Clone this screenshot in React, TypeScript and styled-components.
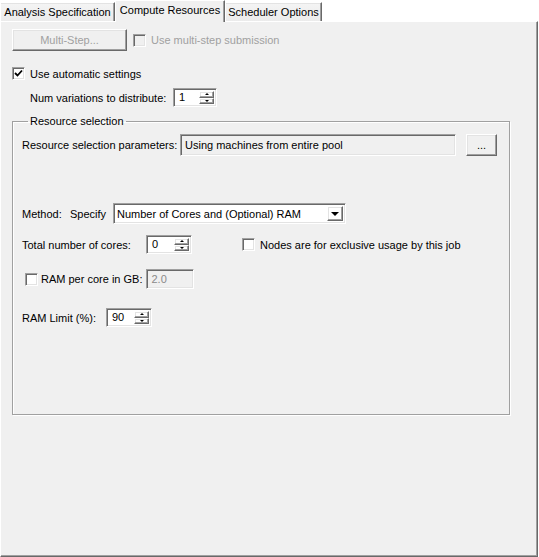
import * as React from 'react';
import styled, { createGlobalStyle, css } from 'styled-components';

/*!
 * Base
 */

const GlobalStyle = createGlobalStyle`
  html, body {
    margin: 0;
    padding: 0;
    background: #ffffff;
  }

  body {
    font: 11px "Liberation Sans", Arial, sans-serif;
    color: #000000;
  }
`;

// classic 3D edges
const sunken = css`
  border-style: solid;
  border-width: 1px;
  border-color: #a0a0a0 #ffffff #ffffff #a0a0a0;
  box-shadow: inset 1px 1px 0 #696969, inset -1px -1px 0 #e3e3e3;
`;

const raised = css`
  border-style: solid;
  border-width: 1px;
  border-color: #ffffff #696969 #696969 #ffffff;
  box-shadow: inset -1px -1px 0 #a0a0a0, inset 1px 1px 0 #e3e3e3;
`;

/*!
 * Components
 */

const Window = styled.div`
  width: 539px;
  height: 557px;
  display: flex;
  flex-direction: column;
  background: #ffffff;
  box-sizing: border-box;
`;

const TabStrip = styled.div`
  display: flex;
  align-items: flex-end;
  height: 21px;
  flex-shrink: 0;
`;

const Tab = styled.div<{ $active?: boolean; $width: number }>`
  box-sizing: border-box;
  width: ${(p) => p.$width}px;
  height: ${(p) => (p.$active ? 22 : 19)}px;
  margin-bottom: ${(p) => (p.$active ? -1 : 0)}px;
  padding-top: 3px;
  text-align: center;
  background: ${(p) => (p.$active ? '#f0f0f0' : 'linear-gradient(#f4f4f4, #ebebeb)')};
  border-style: solid;
  border-width: 1px 1px 0 1px;
  border-color: #ffffff #696969 transparent #ffffff;
  box-shadow: ${(p) => (p.$active ? 'inset -1px 0 0 #a0a0a0' : 'inset -1px 0 0 #a0a0a0, inset 0 1px 0 #e3e3e3')};
  position: relative;
  z-index: ${(p) => (p.$active ? 2 : 1)};
  white-space: nowrap;
`;

const Panel = styled.div`
  flex: 1;
  width: 538px;
  box-sizing: border-box;
  background: #f0f0f0;
  border-style: solid;
  border-width: 1px;
  border-color: #ffffff #696969 #696969 #ffffff;
  box-shadow: inset -1px -1px 0 #a0a0a0;
  padding: 7px 0 0 11px;
  display: flex;
  flex-direction: column;
`;

const Row = styled.div<{ $top?: number; $indent?: number; $height?: number }>`
  display: flex;
  align-items: center;
  margin-top: ${(p) => p.$top ?? 0}px;
  padding-left: ${(p) => p.$indent ?? 0}px;
  height: ${(p) => p.$height ?? 19}px;
`;

const Label = styled.span<{ $width?: number; $disabled?: boolean }>`
  display: inline-block;
  width: ${(p) => (p.$width ? `${p.$width}px` : 'auto')};
  flex-shrink: 0;
  white-space: nowrap;
  color: ${(p) => (p.$disabled ? '#a0a0a0' : '#000000')};
`;

const PushButton = styled.div<{ $width: number; $disabled?: boolean; $gap?: number }>`
  box-sizing: border-box;
  width: ${(p) => p.$width}px;
  height: 22px;
  margin-left: ${(p) => p.$gap ?? 0}px;
  ${raised};
  display: flex;
  align-items: center;
  justify-content: center;
  color: ${(p) => (p.$disabled ? '#a0a0a0' : '#000000')};
  flex-shrink: 0;
`;

const CheckRow = styled.label<{ $gap?: number; $space?: number }>`
  display: flex;
  align-items: center;
  gap: ${(p) => p.$space ?? 5}px;
  margin-left: ${(p) => p.$gap ?? 0}px;
`;

const Box = styled.span<{ $disabled?: boolean }>`
  box-sizing: border-box;
  width: 13px;
  height: 13px;
  ${sunken};
  background: ${(p) => (p.$disabled ? '#f0f0f0' : '#ffffff')};
  display: flex;
  align-items: center;
  justify-content: center;
  flex-shrink: 0;
`;

// read-only text field: grey face, text stays black unless disabled
const Field = styled.div<{ $width: number; $height?: number; $disabled?: boolean; $gap?: number }>`
  box-sizing: border-box;
  width: ${(p) => p.$width}px;
  height: ${(p) => p.$height ?? 20}px;
  margin-left: ${(p) => p.$gap ?? 0}px;
  ${sunken};
  background: #f0f0f0;
  color: ${(p) => (p.$disabled ? '#8a8a8a' : '#000000')};
  display: flex;
  align-items: center;
  padding-left: 4px;
  flex-shrink: 0;
  white-space: nowrap;
  overflow: hidden;
`;

const SpinBox = styled.div<{ $width: number }>`
  box-sizing: border-box;
  width: ${(p) => p.$width}px;
  height: 19px;
  ${sunken};
  background: #ffffff;
  display: flex;
  flex-shrink: 0;
`;

const SpinValue = styled.span`
  flex: 1;
  padding: 2px 0 0 5px;
`;

const SpinButtons = styled.div`
  width: 15px;
  display: flex;
  flex-direction: column;
  padding: 2px 2px 2px 0;
`;

const SpinButton = styled.div`
  flex: 1;
  box-sizing: border-box;
  ${raised};
  display: flex;
  align-items: center;
  justify-content: center;
`;

const Arrow = styled.span<{ $down?: boolean; $size?: number }>`
  width: 0;
  height: 0;
  border-left: ${(p) => p.$size ?? 2}px solid transparent;
  border-right: ${(p) => p.$size ?? 2}px solid transparent;
  ${(p) =>
    p.$down
      ? `border-top: ${p.$size ?? 2}px solid #000;`
      : `border-bottom: ${p.$size ?? 2}px solid #000;`}
`;

const Combo = styled.div<{ $width: number }>`
  box-sizing: border-box;
  width: ${(p) => p.$width}px;
  height: 21px;
  ${sunken};
  background: #ffffff;
  display: flex;
  flex-shrink: 0;
`;

const ComboText = styled.span`
  flex: 1;
  display: flex;
  align-items: center;
  padding-left: 3px;
  white-space: nowrap;
`;

const ComboButton = styled.div`
  width: 16px;
  margin: 2px 2px 2px 0;
  box-sizing: border-box;
  ${raised};
  display: flex;
  align-items: center;
  justify-content: center;
`;

const GroupBox = styled.fieldset`
  box-sizing: border-box;
  width: 498px;
  height: 300px;
  margin: 8px 0 0 0;
  padding: 0 0 0 9px;
  border: 1px solid #a0a0a0;
  box-shadow: 1px 1px 0 #ffffff, inset 1px 1px 0 #ffffff;
  min-width: 0;
`;

const Legend = styled.legend`
  margin-left: 6px;
  padding: 0 2px;
  line-height: 13px;
`;

/*!
 * Parts
 */

const Tick = () => (
  <svg width="9" height="9" viewBox="0 0 9 9">
    <path d="M1 4 L3.5 6.5 L8 1.5" fill="none" stroke="#000" strokeWidth="1.8" />
  </svg>
);

type CheckProps = { checked?: boolean; disabled?: boolean; text: string; gap?: number; space?: number };

const Check = ({ checked, disabled, text, gap, space }: CheckProps) => (
  <CheckRow $gap={gap} $space={space}>
    <Box $disabled={disabled}>{checked && <Tick />}</Box>
    <Label $disabled={disabled}>{text}</Label>
  </CheckRow>
);

const Spinner = ({ value, width }: { value: string; width: number }) => (
  <SpinBox $width={width}>
    <SpinValue>{value}</SpinValue>
    <SpinButtons>
      <SpinButton>
        <Arrow />
      </SpinButton>
      <SpinButton>
        <Arrow $down />
      </SpinButton>
    </SpinButtons>
  </SpinBox>
);

export default function App() {
  return (
    <Window>
      <GlobalStyle />
      <TabStrip>
        <Tab $width={115}>Analysis Specification</Tab>
        <Tab $width={110} $active>Compute Resources</Tab>
        <Tab $width={97}>Scheduler Options</Tab>
      </TabStrip>
      <Panel>
        <Row $height={22}>
          <PushButton $width={115} $disabled>Multi-Step...</PushButton>
          <Check gap={6} disabled text="Use multi-step submission" />
        </Row>

        <Row $top={14} $height={17}>
          <Check checked text="Use automatic settings" />
        </Row>

        <Row $top={6} $indent={18}>
          <Label $width={143}>Num variations to distribute:</Label>
          <Spinner value="1" width={44} />
        </Row>

        <GroupBox>
          <Legend>Resource selection</Legend>

          <Row $top={6} $height={22}>
            <Label $width={158}>Resource selection parameters:</Label>
            <Field $width={276} $height={22}>Using machines from entire pool</Field>
            <PushButton $width={31} $gap={10}>...</PushButton>
          </Row>

          <Row $top={47} $height={21}>
            <Label $width={48}>Method:</Label>
            <Label $width={43}>Specify</Label>
            <Combo $width={233}>
              <ComboText>Number of Cores and (Optional) RAM</ComboText>
              <ComboButton>
                <Arrow $down $size={4} />
              </ComboButton>
            </Combo>
          </Row>

          <Row $top={11}>
            <Label $width={124}>Total number of cores:</Label>
            <Spinner value="0" width={46} />
            <Check gap={50} text="Nodes are for exclusive usage by this job" />
          </Row>

          <Row $top={15} $height={20} $indent={3}>
            <Check space={3} text="RAM per core in GB:" />
            <Field $width={48} $disabled $gap={4}>2.0</Field>
          </Row>

          <Row $top={19}>
            <Label $width={84}>RAM Limit (%):</Label>
            <Spinner value="90" width={46} />
          </Row>
        </GroupBox>
      </Panel>
    </Window>
  );
}
